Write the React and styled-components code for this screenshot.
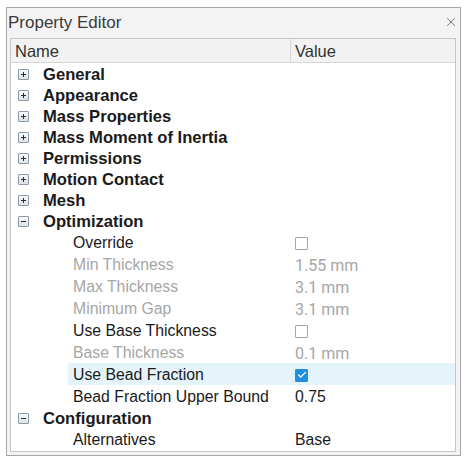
import React from 'react'
import styled, { createGlobalStyle } from 'styled-components'
import { X, Check } from 'lucide-react'

const Global = createGlobalStyle`
body{
  margin:0;
  background:#ffffff;
  font-family:"Liberation Sans", Arial, sans-serif;
}
`;

const Panel = styled.div`
margin:7px 0 0 6px;
width:455px;
height:449px;
box-sizing:border-box;
border:1px solid #a6a6a6;
background:#f3f3f3;
display:flex;
flex-direction:column;
`;

const TitleBar = styled.div`
height:30px;
display:flex;
align-items:center;
justify-content:space-between;
padding:0 2px 0 1px;
`;

const Title = styled.div`
font-size:17px;
color:#3b3b3b;
margin-top:-1px;
`;

const Close = styled.div`
display:flex;
align-items:center;
color:#6b6b6b;
margin-top:-3px;
`;

const Table = styled.div`
margin:0 4px 3px 3px;
flex:1;
border:1px solid #c6c6c6;
background:#ffffff;
display:flex;
flex-direction:column;
`;

const Header = styled.div`
height:23px;
display:flex;
background:#f2f2f2;
border-bottom:1px solid #d6d6d6;
`;

const HeadCell = styled.div`
width:${({w})=>w ? w+'px' : 'auto'};
flex:${({w})=>w ? 'none' : 1};
box-sizing:border-box;
padding:1px 0 0 4px;
display:flex;
align-items:center;
font-size:16.5px;
color:#333;
border-right:${({divider})=>divider ? '1px solid #d6d6d6' : 'none'};
`;

const Row = styled.div`
height:${({group})=>group ? 21 : 22}px;
display:flex;
`;

const Spacer = styled.div`
width:${({w})=>w}px;
flex:none;
display:flex;
align-items:center;
padding:1px 0 0 ${({pad})=>pad || 0}px;
box-sizing:border-box;
`;

const Body = styled.div`
flex:1;
display:flex;
align-items:center;
padding-top:2px;
box-sizing:border-box;
background:${({selected})=>selected ? '#e5f3fb' : 'transparent'};
`;

const NameCell = styled.div`
width:${({w})=>w}px;
flex:none;
box-sizing:border-box;
padding-left:${({pad})=>pad}px;
font-size:${({group})=>group ? 16.6 : 15.8}px;
font-weight:${({group})=>group ? 700 : 400};
color:${({dim})=>dim ? '#a6a6a6' : '#1a1a1a'};
white-space:nowrap;
`;

const ValueCell = styled.div`
flex:1;
padding-left:4px;
font-size:${({dim})=>dim ? 16 : 15.8}px;
display:flex;
align-items:center;
color:${({dim})=>dim ? '#a6a6a6' : '#1a1a1a'};
font-family:${({dim})=>dim ? 'Roboto, "Liberation Sans", sans-serif' : 'inherit'};
`;

const Expander = styled.div`
width:9px;
height:9px;
border:1px solid #8e9aa8;
border-radius:1px;
background:linear-gradient(#fafafa, #dde2e8);
position:relative;
&::before{
  content:'';
  position:absolute;
  left:2px; top:4px;
  width:5px; height:1px;
  background:#2b2b2b;
}
&::after{
  content:'';
  display:${({open})=>open ? 'none' : 'block'};
  position:absolute;
  left:4px; top:2px;
  width:1px; height:5px;
  background:#2b2b2b;
}
`;

const Box = styled.div`
width:13px;
height:13px;
box-sizing:border-box;
border:1px solid ${({checked})=>checked ? '#1e8fe1' : '#a5a5a5'};
border-radius:1px;
background:${({checked})=>checked ? '#1e8fe1' : '#fff'};
display:flex;
align-items:center;
justify-content:center;
color:#fff;
`;

const NAME_W = 280;

const groups = [
  { name: 'General' },
  { name: 'Appearance' },
  { name: 'Mass Properties' },
  { name: 'Mass Moment of Inertia' },
  { name: 'Permissions' },
  { name: 'Motion Contact' },
  { name: 'Mesh' },
  {
    name: 'Optimization', open: true, items: [
      { name: 'Override', check: false },
      { name: 'Min Thickness', value: '1.55 mm', dim: true },
      { name: 'Max Thickness', value: '3.1 mm', dim: true },
      { name: 'Minimum Gap', value: '3.1 mm', dim: true },
      { name: 'Use Base Thickness', check: false },
      { name: 'Base Thickness', value: '0.1 mm', dim: true },
      { name: 'Use Bead Fraction', check: true, selected: true },
      { name: 'Bead Fraction Upper Bound', value: '0.75' },
    ]
  },
  {
    name: 'Configuration', open: true, items: [
      { name: 'Alternatives', value: 'Base' },
    ]
  },
];

const GroupRow = ({ g }) => (
  <Row group>
    <Spacer w={32} pad={7}>
      <Expander open={g.open} />
    </Spacer>
    <Body>
      <NameCell w={NAME_W - 32} group>{g.name}</NameCell>
    </Body>
  </Row>
);

const ItemRow = ({ it }) => (
  <Row>
    <Spacer w={57} />
    <Body selected={it.selected}>
      <NameCell w={NAME_W - 57} pad={5} dim={it.dim}>{it.name}</NameCell>
      <ValueCell dim={it.dim}>
        {it.check !== undefined
          ? <Box checked={it.check}>{it.check && <Check size={10} strokeWidth={3} />}</Box>
          : it.value}
      </ValueCell>
    </Body>
  </Row>
);

const App = () => {
  return (
    <>
      <Global />
      <Panel>
        <TitleBar>
          <Title>Property Editor</Title>
          <Close><X size={14} strokeWidth={1.5} /></Close>
        </TitleBar>
        <Table>
          <Header>
            <HeadCell w={NAME_W} divider>Name</HeadCell>
            <HeadCell>Value</HeadCell>
          </Header>
          {groups.map(g => (
            <React.Fragment key={g.name}>
              <GroupRow g={g} />
              {g.items && g.items.map(it => <ItemRow key={it.name} it={it} />)}
            </React.Fragment>
          ))}
        </Table>
      </Panel>
    </>
  )
}

export default App
